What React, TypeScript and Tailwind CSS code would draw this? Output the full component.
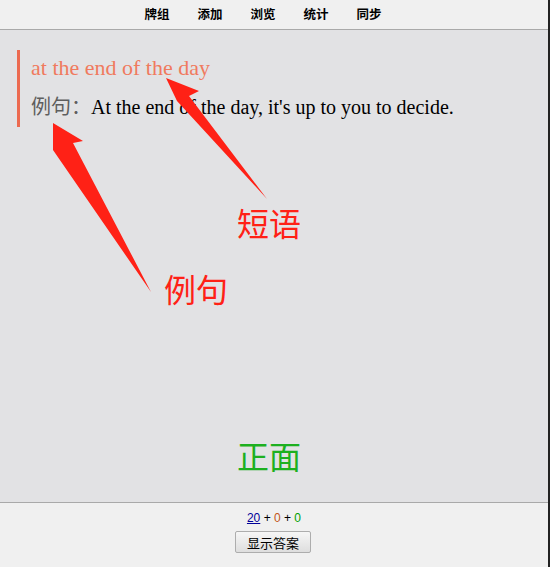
const cjk = { fontFamily: '"Noto Sans CJK SC", sans-serif' }

function Arrows() {
  return (
    <svg
      className="pointer-events-none absolute left-0 top-0"
      width={550}
      height={567}
      viewBox="0 0 550 567"
    >
      {/* arrow to the phrase */}
      <polygon points="166,78 199,91 189,96 267,199 177,101" fill="#ff2116" />
      {/* arrow to the example */}
      <polygon points="53,123 83,141 73,143 151,292 53,150" fill="#ff2116" />
    </svg>
  )
}

export default function App() {
  const tabs = ["牌组", "添加", "浏览", "统计", "同步"]

  return (
    <div className="relative flex h-[567px] w-[550px] flex-col overflow-hidden border-r-2 border-[#222] bg-[#e2e2e4]">
      <div className="flex h-[30px] shrink-0 items-center justify-center gap-[28px] border-b border-[#a9a9a9] bg-[#f0f0f0] pr-[22px] pb-[1px]">
        {tabs.map((t) => (
          <span key={t} className="text-[12.5px] font-bold text-black" style={cjk}>
            {t}
          </span>
        ))}
      </div>

      <div className="flex-1 px-[17px] pt-[20px]">
        <div
          className="border-l-[3px] border-[#ec6a50] pl-[11px] pb-[4px]"
          style={{ fontFamily: '"Liberation Serif", "Noto Sans CJK SC", serif' }}
        >
          <div className="text-[22px] leading-[36px] text-[#f07a5e]">at the end of the day</div>
          <div className="mt-[5px] text-[20px] leading-[32px] text-black">
            <span className="text-[#5e5e5e]">例句：</span>
            At the end of the day, it's up to you to decide.
          </div>
        </div>
      </div>

      <div className="flex h-[65px] shrink-0 flex-col items-center border-t border-[#a9a9a9] bg-[#f0f0f0] pt-[7px]">
        <div className="text-[12px] leading-[16px]" style={{ fontFamily: '"Liberation Sans", sans-serif' }}>
          <span className="text-[#000099] underline">20</span>
          <span> + </span>
          <span className="text-[#c35617]">0</span>
          <span> + </span>
          <span className="text-[#00a000]">0</span>
        </div>
        <button
          className="mt-[5px] mr-[2px] h-[22px] w-[76px] rounded-[2px] border border-[#adadad] bg-gradient-to-b from-[#f6f6f6] to-[#dedede] text-[13px] leading-none text-black"
          style={cjk}
        >
          显示答案
        </button>
      </div>

      <Arrows />
      <span className="absolute left-[237px] top-[206px] text-[32px] leading-none text-[#ff2116]" style={cjk}>
        短语
      </span>
      <span className="absolute left-[164px] top-[272px] text-[32px] leading-none text-[#ff2116]" style={cjk}>
        例句
      </span>
      <span className="absolute left-[237px] top-[439px] text-[32px] leading-none text-[#1db020]" style={cjk}>
        正面
      </span>
    </div>
  )
}
